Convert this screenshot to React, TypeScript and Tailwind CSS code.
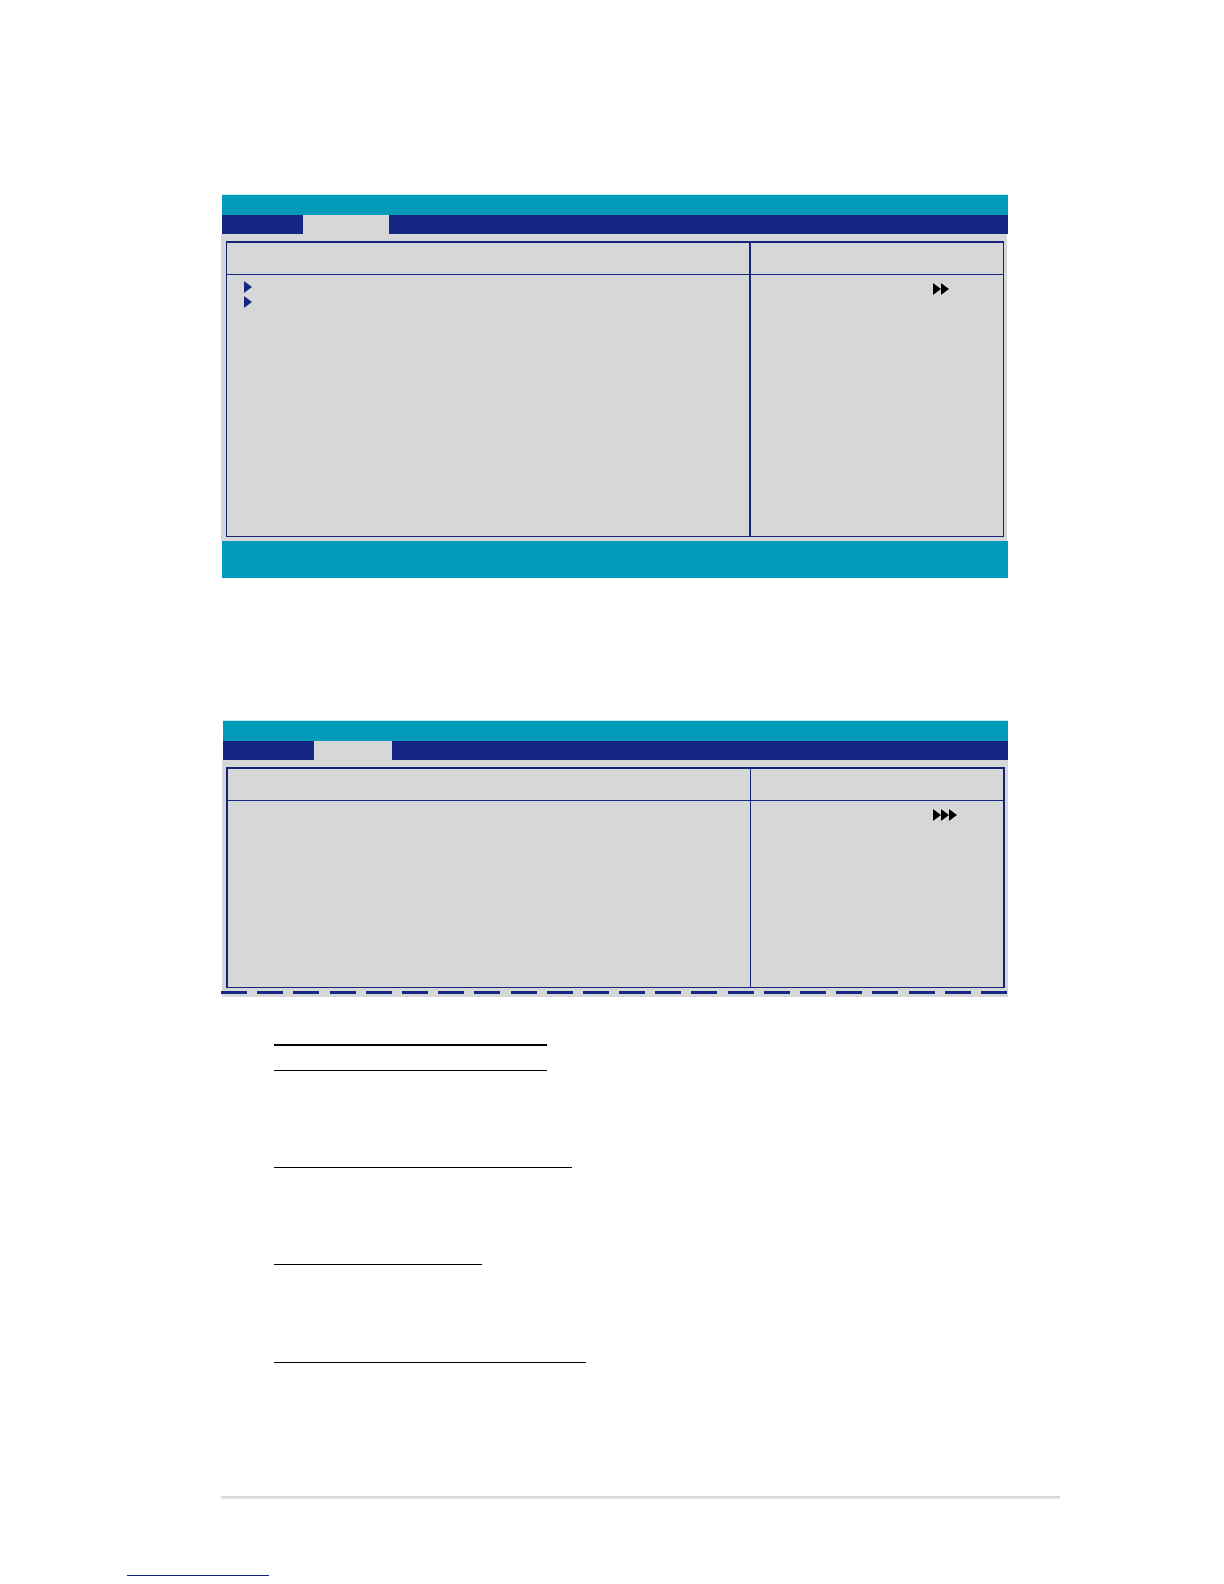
import React from 'react';

const DASHES = Array.from({ length: 22 }, (_, i) => i);

function Arrow({ className }: { className: string }) {
  return (
    <svg className={`block h-3 w-2 shrink-0 ${className}`} viewBox="0 0 8 12" aria-hidden="true">
      <path d="M0 0 L8 6 L0 12 Z" fill="currentColor" />
    </svg>
  );
}

// Black arrows in the help column
function LevelArrows({ count }: { count: number }) {
  return (
    <div className="flex pl-[182px] pt-2 text-black">
      {Array.from({ length: count }, (_, i) => (
        <Arrow key={i} className="text-black" />
      ))}
    </div>
  );
}

function MenuBar({ tabClass }: { tabClass: string }) {
  return (
    <div className="ml-px border-t border-[#c5eaf0]">
      <div className="h-5 bg-[#009bba]" />
      <div className="flex h-[19px] bg-[#152782]">
        <div className={`bg-[#d5d7d8] ${tabClass}`} />
      </div>
    </div>
  );
}

function MainPanel() {
  return (
    <section className="mr-[52px]">
      <MenuBar tabClass="ml-[81px] w-[86px]" />
      <div className="mr-px bg-[#d5d7d8] pl-[5px] pr-[3px] pt-[7px] pb-1">
        <div className="flex h-[296px] border border-t-2 border-[#152478]">
          <div className="flex-1">
            <div className="h-8 border-b border-[#152782]" />
            <div className="flex flex-col gap-[3px] pl-[17px] pt-[6px]">
              <Arrow className="text-[#152782]" />
              <Arrow className="text-[#152782]" />
            </div>
          </div>
          <div className="w-[254px] border-l-2 border-[#152478]">
            <div className="h-8 border-b border-[#152782]" />
            <LevelArrows count={2} />
          </div>
        </div>
      </div>
      <div className="ml-px h-[37px] bg-[#009bba]" />
    </section>
  );
}

function SecondPanel() {
  return (
    <section className="mr-[52px]">
      <div className="ml-px">
        <MenuBar tabClass="ml-[91px] w-[78px]" />
        <div className="bg-[#d5d7d8] pl-1 pr-[3px] pt-[7px] pb-[3px]">
          <div className="flex h-[221px] border-2 border-b border-[#152478]">
            <div className="flex-1">
              <div className="h-8 border-b border-[#152782]" />
            </div>
            <div className="w-[253px] border-l border-[#152478]">
              <div className="h-8 border-b border-[#152782]" />
              <LevelArrows count={3} />
            </div>
          </div>
        </div>
      </div>
      {/* Torn edge of the panel */}
      <div className="bg-linear-to-r from-white from-[1px] to-[#d5d7d8] to-[1px] pb-[3px]">
        <div className="mr-px flex justify-between">
          {DASHES.map((i) => (
            <div key={i} className="h-[3px] w-[26px] bg-[#152782]" />
          ))}
        </div>
      </div>
    </section>
  );
}

function App() {
  return (
    <div className="min-h-screen bg-white font-['Liberation_Sans',sans-serif]">
      <main className="pl-[221px] pr-[164px] pt-[194px]">
        <MainPanel />
        <div className="mt-[142px]">
          <SecondPanel />
        </div>

        {/* Rules under the section headings */}
        <div className="ml-[53px] mt-[47px]">
          <div className="h-[2px] w-[273px] bg-black" />
          <div className="mt-6 h-px w-[273px] bg-black" />
          <div className="mt-24 h-px w-[298px] bg-black" />
          <div className="mt-24 h-px w-[208px] bg-black" />
          <div className="mt-[97px] h-px w-[312px] bg-black" />
        </div>

        <div className="mt-[133px] h-[3px] border-t border-[#d4d4d4] bg-[#e1e1e1]" />
      </main>
      <footer className="pb-2 pl-[127px] pt-[76px]">
        <div className="h-px w-[142px] bg-[#15207c]" />
      </footer>
    </div>
  );
}

export default App;
